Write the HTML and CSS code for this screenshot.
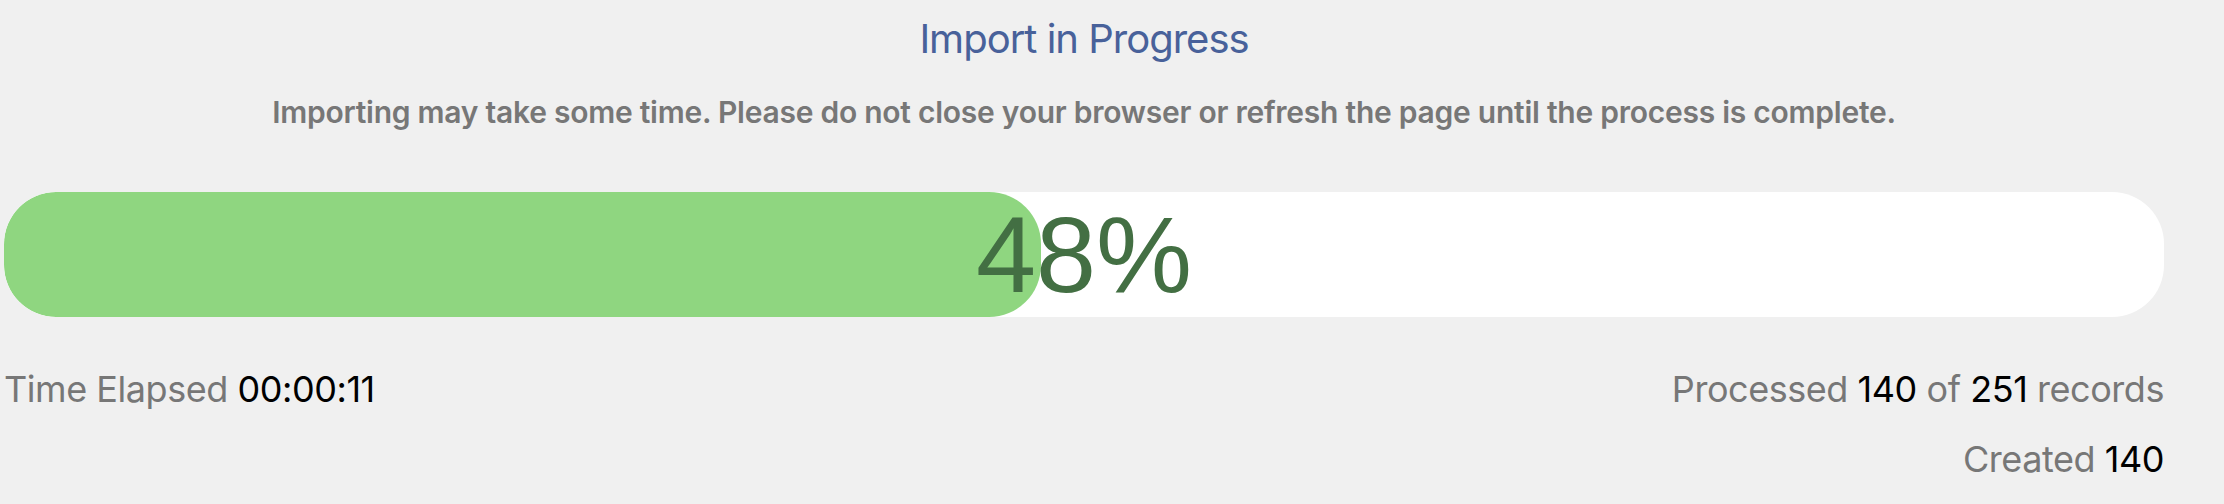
FILE: index.html
```html
<!DOCTYPE html>
<html lang="en">
<head>
  <meta charset="UTF-8" />
  <meta name="viewport" content="width=device-width, initial-scale=1.0"/>
  <title>Import in Progress</title>
  <link rel="stylesheet" href="styles.css">
</head>
<body>
  <div class="import">
    <h1>Import in Progress</h1>
    <p class="warn">Importing may take some time. Please do not close your browser or refresh the page until the process is complete.</p>

    <div class="bar">
      <div class="fill" style="width: 48%"></div>
      <div class="pct">48%</div>
    </div>

    <div class="stats">
      <div class="stat">Time Elapsed <span class="val">00:00:11</span></div>
      <div class="counts">
        <div class="stat">Processed <span class="val">140</span> of <span class="val">251</span> records</div>
        <div class="stat">Created <span class="val">140</span></div>
      </div>
    </div>
  </div>
</body>
</html>
```

FILE: styles.css
```css
body { margin: 0; padding: 0; background: #f0f0f0; font-family: Inter, "Noto Sans", sans-serif; }
.import { padding: 0 60px 0 4px; }
h1 { margin: 0; padding-top: 15px; font-size: 40px; font-weight: 400; line-height: 48px; letter-spacing: -1px; color: #48619a; text-align: center; }
.warn { margin: 31px 0 0; font-size: 30px; font-weight: 600; line-height: 36px; letter-spacing: -0.25px; color: #777; text-align: center; }
.bar { display: grid; height: 125px; margin-top: 62px; background: white; border-radius: 52px; overflow: hidden; }
.fill, .pct { grid-area: 1 / 1; }
.fill { background: #8fd680; border-radius: 52px; }
.pct { align-self: center; justify-self: center; font-family: "Liberation Sans", Arial, sans-serif; font-size: 108px; line-height: 1; color: #436f43; }
.stats { display: flex; justify-content: space-between; margin-top: 50px; }
.counts { display: flex; flex-direction: column; align-items: flex-end; gap: 26px; }
.stat { font-size: 36px; line-height: 44px; letter-spacing: -0.45px; color: #777; }
.val { color: #000; }
```
